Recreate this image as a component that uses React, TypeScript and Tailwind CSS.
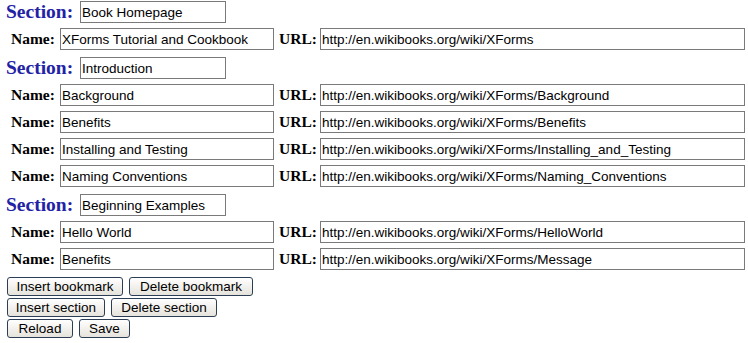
import React from "react";

type Link = { name: string; url: string };
type Section = { title: string; links: Link[] };

const SECTIONS: Section[] = [
  {
    title: "Book Homepage",
    links: [{ name: "XForms Tutorial and Cookbook", url: "http://en.wikibooks.org/wiki/XForms" }],
  },
  {
    title: "Introduction",
    links: [
      { name: "Background", url: "http://en.wikibooks.org/wiki/XForms/Background" },
      { name: "Benefits", url: "http://en.wikibooks.org/wiki/XForms/Benefits" },
      { name: "Installing and Testing", url: "http://en.wikibooks.org/wiki/XForms/Installing_and_Testing" },
      { name: "Naming Conventions", url: "http://en.wikibooks.org/wiki/XForms/Naming_Conventions" },
    ],
  },
  {
    title: "Beginning Examples",
    links: [
      { name: "Hello World", url: "http://en.wikibooks.org/wiki/XForms/HelloWorld" },
      { name: "Benefits", url: "http://en.wikibooks.org/wiki/XForms/Message" },
    ],
  },
];

const inputCls =
  "h-[22px] border border-[#7a7a7a] bg-white px-[1px] text-[13.5px] text-black font-['Liberation_Sans',Arial,sans-serif] outline-none";

function Field({ value, width }: { value: string; width: string }) {
  return <input readOnly defaultValue={value} className={`${inputCls} ${width}`} />;
}

function Button({ label, width }: { label: string; width: string }) {
  return (
    <button
      className={`h-[19px] ${width} rounded-[3px] border border-[#2c3e55] bg-gradient-to-b from-white to-[#e6e3dc] text-[13.5px] leading-none text-black font-['Liberation_Sans',Arial,sans-serif]`}
    >
      {label}
    </button>
  );
}

export default function App() {
  return (
    <div className="w-[748px] h-[343px] bg-white overflow-hidden font-['Liberation_Serif',serif]">
      <div className="flex flex-col gap-[5px] pt-[1px]">
        {SECTIONS.map((section, i) => (
          <React.Fragment key={section.title}>
            {/* Section heading */}
            <div className={`flex items-center h-[22px] ${i > 0 ? "mt-[2px]" : ""}`}>
              <span className="ml-[6px] w-[74px] text-[19.5px] font-bold text-[#2222a6] leading-none">
                Section:
              </span>
              <Field value={section.title} width="w-[146px]" />
            </div>

            {/* Links */}
            {section.links.map((link, j) => (
              <div key={j} className="flex items-center h-[22px]">
                <span className="ml-[11px] w-[49px] text-[15.5px] font-bold text-black leading-none">
                  Name:
                </span>
                <Field value={link.name} width="w-[214px]" />
                <span className="ml-[5px] w-[41px] text-[15.5px] font-bold text-black leading-none">
                  URL:
                </span>
                <Field value={link.url} width="w-[425px]" />
              </div>
            ))}
          </React.Fragment>
        ))}

        <div className="mt-[2px] ml-[7px] flex flex-col gap-[2px]">
          <div className="flex gap-[6px]">
            <Button label="Insert bookmark" width="w-[116px]" />
            <Button label="Delete bookmark" width="w-[124px]" />
          </div>
          <div className="flex gap-[6px]">
            <Button label="Insert section" width="w-[98px]" />
            <Button label="Delete section" width="w-[106px]" />
          </div>
          <div className="flex gap-[6px]">
            <Button label="Reload" width="w-[66px]" />
            <Button label="Save" width="w-[51px]" />
          </div>
        </div>
      </div>
    </div>
  );
}
